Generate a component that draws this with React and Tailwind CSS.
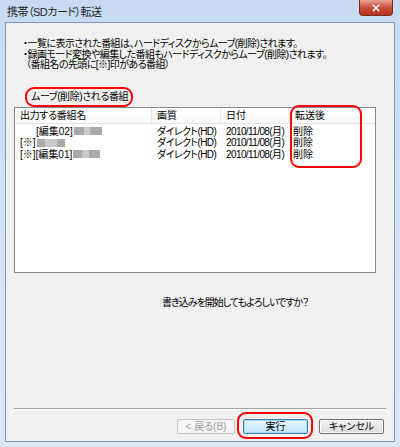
import { X } from 'lucide-react';

const FONT = "font-['Liberation_Sans','Noto_Sans_CJK_JP',sans-serif] [font-feature-settings:'palt']";

const ROWS = [
  { pre: '[編集02] ', indent: true, blur: [10, 6, 12] },
  { pre: '[※]', indent: false, blur: [8, 12, 8] },
  { pre: '[※][編集01] ', indent: false, blur: [9, 7, 11] },
];

function Mosaic({ parts }) {
  return (
    <span className="inline-flex items-center h-[9px] ml-[1px] blur-[0.6px]">
      {parts.map((w, i) => (
        <span
          key={i}
          className={`h-[8px] ${i % 2 ? 'bg-[#c9c9c9]' : 'bg-[#a9a9a9]'}`}
          style={{ width: w }}
        />
      ))}
    </span>
  );
}

function Button({ children, disabled, focused, width }) {
  const base = 'h-[15px] flex items-center justify-center rounded-[2px] border text-[10px] whitespace-nowrap';
  const tone = disabled
    ? 'border-[#c5c5c5] bg-[#f4f4f4] text-[#a0a0a0]'
    : focused
      ? 'border-[#3c7fb1] bg-gradient-to-b from-[#eaf6fd] to-[#bee6fd] text-black shadow-[inset_0_0_0_1px_#a7d9f5]'
      : 'border-[#707070] bg-gradient-to-b from-[#f2f2f2] to-[#dcdcdc] text-black shadow-[inset_0_0_0_1px_#fcfcfc]';
  return (
    <div className={`${base} ${tone}`} style={{ width }}>
      {children}
    </div>
  );
}

export default function App() {
  return (
    <div className={`relative w-[400px] h-[447px] overflow-hidden bg-gradient-to-b from-[#c6dbf2] to-[#d9e7f6] ${FONT} text-black`}>
      {/* title bar */}
      <div className="h-[22px] flex items-start justify-between">
        <div className="pl-[7px] pt-[5px] text-[11px] leading-[14px] text-[#1e1e1e] tracking-[-0.5px]">携帯（SDカード）転送</div>
        <div className="mr-[7px] w-[34px] h-[16px] rounded-b-[4px] border border-t-0 border-[#7a2a22] bg-gradient-to-b from-[#e8a493] via-[#c9513d] to-[#b8321e] flex items-center justify-center">
          <X className="w-[10px] h-[10px] text-white" strokeWidth={4} />
        </div>
      </div>

      {/* client area */}
      <div className="mx-[5px] h-[420px] border border-[#8597b0] bg-[#f0f0f0] flex flex-col">
        <div className="pl-[17px] pt-[16px] text-[10px] leading-[10.5px] tracking-[-0.55px] whitespace-nowrap">
          <div>・一覧に表示された番組は、ハードディスクからムーブ(削除)されます。</div>
          <div>・録画モード変換や編集した番組もハードディスクからムーブ(削除)されます。</div>
          <div className="pl-[3px]">（番組名の先頭に[※]印がある番組）</div>
        </div>

        <div className="pl-[25px] mt-[20px] text-[10px] leading-[12px] tracking-[-0.4px]">ムーブ(削除)される番組</div>

        <div className="ml-[8px] mt-[4px] w-[362px] h-[166px] border border-[#828790] bg-white text-[10px] whitespace-nowrap">
          <div className="flex h-[16px] border-b border-[#e5e5e5] bg-gradient-to-b from-white to-[#f7f8fa] leading-[16px]">
            <div className="w-[137px] pl-[5px] border-r border-[#e5e5e5] tracking-[-0.3px]">出力する番組名</div>
            <div className="w-[69px] pl-[5px] border-r border-[#e5e5e5]">画質</div>
            <div className="w-[68px] pl-[5px] border-r border-[#e5e5e5]">日付</div>
            <div className="flex-1 pl-[6px]">転送後</div>
          </div>
          <div className="pt-[2px]">
            {ROWS.map((r, i) => (
              <div key={i} className="flex h-[11.5px] leading-[11.5px]">
                <div className={`w-[137px] flex items-center ${r.indent ? 'pl-[21px]' : 'pl-[5px]'}`}>
                  <span>{r.pre}</span>
                  <Mosaic parts={r.blur} />
                </div>
                <div className="w-[69px] pl-[5px] tracking-[-0.6px]">ダイレクト(HD)</div>
                <div className="w-[68px] pl-[5px] tracking-[-0.6px]">2010/11/08(月)</div>
                <div className="flex-1 pl-[4px]">削除</div>
              </div>
            ))}
          </div>
        </div>

        <div className="pl-[156px] mt-[24px] text-[10px] leading-[12px] tracking-[-1px]">書き込みを開始してもよろしいですか？</div>

        <div className="flex-1" />

        <div className="mx-[8px] h-[2px] border-t border-[#a0a0a0] border-b border-b-white" />

        <div className="flex justify-end gap-[8px] pr-[10px] mt-[9px] mb-[7px]">
          <Button disabled width={58}>&lt; 戻る(B)</Button>
          <Button focused width={65}>実行</Button>
          <div className="ml-[3px]">
            <Button width={65}>キャンセル</Button>
          </div>
        </div>
      </div>

      {/* red annotation marks */}
      <div className="absolute left-[25px] top-[87px] w-[108px] h-[20px] rounded-[9px] border-[2.5px] border-[#ff0000]" />
      <div className="absolute left-[290px] top-[105px] w-[72px] h-[63px] rounded-[9px] border-[2.5px] border-[#ff0000]" />
      <div className="absolute left-[237px] top-[412px] w-[76px] h-[27px] rounded-[9px] border-[2.5px] border-[#ff0000]" />
    </div>
  );
}
